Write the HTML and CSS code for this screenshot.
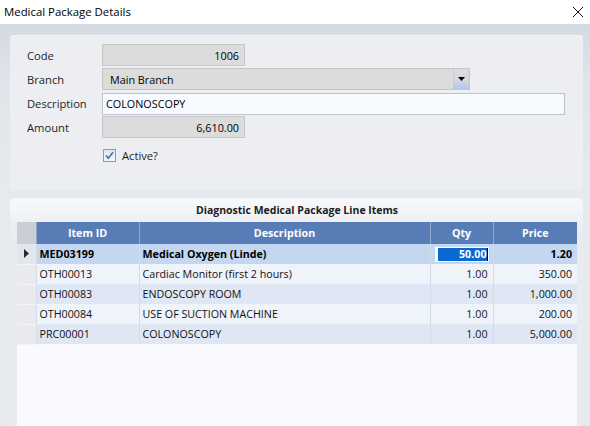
FILE: index.html
```html
<!DOCTYPE html>
<html>
<head>
<meta charset="utf-8">
<link rel="stylesheet" href="styles.css">
</head>
<body>
<div class="window">
  <div class="titlebar">
    <span class="title">Medical Package Details</span>
    <svg class="close" width="12" height="12" viewBox="0 0 12 12"><path d="M1 1 L11 11 M11 1 L1 11" stroke="#111" stroke-width="1" fill="none"/></svg>
  </div>
  <div class="client">
    <div class="panel top">
      <div class="form">
        <div class="lbl">Code</div>
        <div class="field ro num short">1006</div>
        <div class="lbl">Branch</div>
        <div class="field combo"><span class="ctext">Main Branch</span><span class="drop"><svg width="7" height="4" viewBox="0 0 7 4"><path d="M0 0 H7 L3.5 4 Z" fill="#000"/></svg></span></div>
        <div class="lbl">Description</div>
        <div class="field edit">COLONOSCOPY</div>
        <div class="lbl">Amount</div>
        <div class="field ro num short">6,610.00</div>
        <div class="lbl"></div>
        <div class="check"><span class="box"><svg width="11" height="11" viewBox="0 0 11 11"><path d="M2 5.5 L4.3 8.2 L9 2.2" stroke="#4a6aa6" stroke-width="1.6" fill="none"/></svg></span><span>Active?</span></div>
      </div>
    </div>
    <div class="panel bottom">
      <div class="ptitle">Diagnostic Medical Package Line Items</div>
      <div class="grid">
        <table>
          <colgroup><col class="c0"><col class="c1"><col class="c2"><col class="c3"><col class="c4"></colgroup>
          <thead>
            <tr><th class="rh"></th><th>Item ID</th><th>Description</th><th>Qty</th><th>Price</th></tr>
          </thead>
          <tbody>
            <tr class="sel"><td class="rh"><svg width="5" height="9" viewBox="0 0 5 9"><path d="M0 0 L5 4.5 L0 9 Z" fill="#1d2b45"/></svg></td><td>MED03199</td><td>Medical Oxygen (Linde)</td><td class="n editcell"><div class="editor"><span class="hl">50.00</span><span class="caret"></span></div></td><td class="n">1.20</td></tr>
            <tr class="odd"><td class="rh"></td><td>OTH00013</td><td>Cardiac Monitor (first 2 hours)</td><td class="n">1.00</td><td class="n">350.00</td></tr>
            <tr class="even"><td class="rh"></td><td>OTH00083</td><td>ENDOSCOPY ROOM</td><td class="n">1.00</td><td class="n">1,000.00</td></tr>
            <tr class="odd"><td class="rh"></td><td>OTH00084</td><td>USE OF SUCTION MACHINE</td><td class="n">1.00</td><td class="n">200.00</td></tr>
            <tr class="even"><td class="rh"></td><td>PRC00001</td><td>COLONOSCOPY</td><td class="n">1.00</td><td class="n">5,000.00</td></tr>
          </tbody>
        </table>
        <div class="empty"></div>
      </div>
    </div>
  </div>
</div>
</body>
</html>
```
FILE: styles.css
```css
* { box-sizing: border-box; }
html, body { margin: 0; padding: 0; }
body {
  width: 590px;
  height: 426px;
  overflow: hidden;
  font-family: "Open Sans", "Noto Sans", sans-serif;
  font-size: 10.7px;
  color: #1a1a1a;
  background: #fff;
}
.window { width: 590px; height: 426px; display: flex; flex-direction: column; }
.titlebar {
  height: 24px;
  flex: none;
  background: #fff;
  display: flex;
  align-items: center;
  justify-content: space-between;
  padding: 0 6px 2px 4px;
  font-size: 11.4px;
  color: #000;
}
.close { margin-top: 1px; }
.client {
  flex: 1;
  background: linear-gradient(#d4d9e2 0px, #e1e5eb 60px, #e6e9ee 160px);
  padding: 11px 7px 0 10px;
  display: flex;
  flex-direction: column;
  gap: 8px;
  min-height: 0;
}
.panel {
  background: #eceef2;
  border-radius: 4px;
}
.panel.top {
  height: 155px;
  flex: none;
  padding: 9px 0 0 17px;
  box-shadow: inset 0 1px 0 #f3f4f7;
}
.form {
  display: grid;
  grid-template-columns: 75px 1fr;
  grid-template-rows: 22px 22px 22px 22px 22px;
  row-gap: 2px;
  align-items: center;
}
.form > .lbl:nth-child(5), .form > .field:nth-child(6) { margin-top: 1px; }
.lbl { color: #1e1e1e; font-size: 11.2px; }
.field {
  height: 22px;
  border: 1px solid #c4c6ca;
  display: flex;
  align-items: center;
  padding: 0 5px;
  color: #000;
  font-size: 10.8px;
}
.ro { background: #dcdcdc; }
.num { justify-content: flex-end; }
.short { width: 143px; }
.combo { width: 368px; background: #dcdcdc; padding: 0 0 0 7px; justify-content: space-between; }
.drop {
  width: 16px;
  height: 20px;
  display: flex;
  align-items: center;
  justify-content: center;
  background: linear-gradient(#dcdcdc 0%, #d6d9e0 50%, #b4c6ea 100%);
  border-left: 1px solid #c9ccd2;
}
.edit { width: 463px; background: #f7faff; border-color: #bfc3c9; padding-left: 3px; }
.check {
  display: flex;
  align-items: center;
  gap: 6px;
  margin-top: 9px;
  padding-left: 1px;
  font-size: 11.2px;
  color: #1e1e1e;
}
.box {
  width: 13px;
  height: 13px;
  border: 1px solid #8e98ab;
  background: linear-gradient(#dfe5f0, #f3f6fb);
  display: flex;
  align-items: center;
  justify-content: center;
}
.panel.bottom {
  flex: 1;
  min-height: 0;
  display: flex;
  flex-direction: column;
  padding: 0 6px 0 7px;
  border-radius: 5px 5px 0 0;
  background: linear-gradient(#f8f9fb 0px, #eef0f3 24px, #e9ebef 40px);
}
.ptitle {
  height: 24px;
  flex: none;
  display: flex;
  align-items: center;
  justify-content: center;
  font-weight: bold;
  color: #1c1c1c;
  font-size: 10.5px;
  padding-bottom: 1px;
}
.grid { flex: 1; display: flex; flex-direction: column; background: #f8fafd; }
table {
  border-collapse: collapse;
  table-layout: fixed;
  width: 560px;
  font-size: 10.7px;
}
col.c0 { width: 19px; }
col.c1 { width: 103px; }
col.c2 { width: 291px; }
col.c3 { width: 63px; }
col.c4 { width: 84px; }
th {
  height: 22px;
  background: #587cb5;
  color: #fff;
  font-weight: bold;
  text-align: center;
  padding: 0;
  border-left: 1px solid #8ea8d2;
}
th:first-child { border-left: none; }
th.rh { background: #c9ced7; }
td {
  height: 20px;
  padding: 0 4px 0 3px;
  white-space: nowrap;
  overflow: hidden;
  color: #111;
  border-left: 1px solid #d2dcec;
}
td:nth-child(3) { padding-left: 3px; }
td.n { text-align: right; padding-right: 5px; }
td.rh { background: #e8eaee; border-left: none; padding: 0; text-align: center; border-bottom: 1px solid #f2f3f5; }
tr.sel td { background: #c4d7f1; font-weight: bold; color: #000; }
tr.sel td.rh { background: #e3e6eb; }
tr.sel td.rh svg { display: block; margin: 0 0 0 7px; }
tr.odd td { background: #eff3fa; }
tr.even td { background: #dfe7f5; }
tr.odd td.rh, tr.even td.rh { background: #e8eaee; }
td.editcell { padding: 0 4px 0 4px; background: #c4d7f1; }
.editor {
  height: 15px;
  background: #fff;
  padding: 1px 1px 1px 3px;
  display: flex;
  justify-content: flex-end;
  align-items: stretch;
}
.hl {
  flex: 1;
  background: #0a6ad4;
  color: #fff;
  text-align: right;
  line-height: 13px;
  padding-right: 0;
}
.caret { width: 1px; background: #000; }
.empty { flex: 1; width: 560px; background: #f8fafd; }
```
